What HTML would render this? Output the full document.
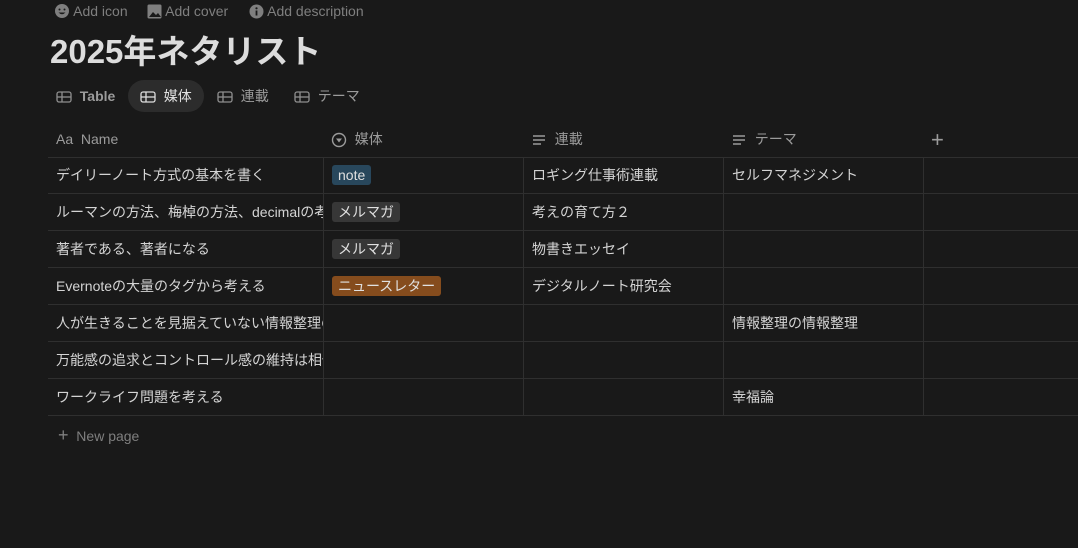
<!DOCTYPE html><html><head><meta charset="utf-8"><style>
body{margin:0;width:1078px;height:548px;background:#191919;font-family:"Liberation Sans","Noto Sans CJK JP",sans-serif;color:#d4d4d4;overflow:hidden;position:relative}
.a{position:absolute;white-space:nowrap}
.top{top:2px;font-size:14px;color:#7f7f7f;line-height:18px}
.tab{top:86px;font-size:14px;color:#9b9b9b;font-weight:bold;line-height:20px}
.row{position:absolute;left:48px;width:1030px;height:36px;border-bottom:1px solid #2f2f2f}
.c{position:absolute;top:0;height:37px;line-height:37px;font-size:14px;overflow:hidden;white-space:nowrap;padding-left:8px;box-sizing:border-box}
.v{position:absolute;top:0;width:1px;height:37px;background:#2f2f2f}
.tag{display:inline-block;line-height:20px;padding:0 6px;border-radius:3px;font-size:14px;color:#e0e0e0}
.h{color:#9b9b9b}
svg{vertical-align:middle}
</style></head><body>
<div class="a top" style="left:54px"><svg width="16" height="16" style="vertical-align:-3px"><circle cx="8" cy="8" r="7" fill="#7f7f7f"/><circle cx="5.5" cy="6.5" r="1" fill="#191919"/><circle cx="10.5" cy="6.5" r="1" fill="#191919"/><path d="M4.5 9.5q3.5 3.5 7 0" fill="#191919"/></svg> Add icon</div>
<div class="a top" style="left:147px"><svg width="15" height="15" style="vertical-align:-3px"><rect x="0.5" y="0.5" width="14" height="14" rx="1.5" fill="#7f7f7f"/><path d="M2 13l4-5 3 3 2-2 3 4z" fill="#191919"/></svg> Add cover</div>
<div class="a top" style="left:249px"><svg width="15" height="15" style="vertical-align:-3px"><circle cx="7.5" cy="7.5" r="7" fill="#7f7f7f"/><rect x="6.6" y="6.5" width="1.8" height="5" fill="#191919"/><circle cx="7.5" cy="4.3" r="1.1" fill="#191919"/></svg> Add description</div>
<div class="a" style="left:50px;top:25px;font-size:33px;font-weight:bold;color:#dcdcdc">2025年ネタリスト</div>
<div class="a" style="left:128px;top:80px;width:76px;height:32px;border-radius:16px;background:#2c2c2c"></div>
<div class="a tab" style="left:56px"><svg width="16" height="14"><rect x="1" y="2" width="14" height="10" rx="2" fill="none" stroke="#8f8f8f" stroke-width="1.3"/><line x1="1" y1="7" x2="15" y2="7" stroke="#8f8f8f" stroke-width="1.3"/><line x1="6" y1="2" x2="6" y2="12" stroke="#8f8f8f" stroke-width="1.3"/></svg>&nbsp; Table</div>
<div class="a tab" style="left:140px;color:#e0e0e0;font-weight:normal"><svg width="16" height="14"><rect x="1" y="2" width="14" height="10" rx="2" fill="none" stroke="#ddd" stroke-width="1.3"/><line x1="1" y1="7" x2="15" y2="7" stroke="#ddd" stroke-width="1.3"/><line x1="6" y1="2" x2="6" y2="12" stroke="#ddd" stroke-width="1.3"/></svg>&nbsp; 媒体</div>
<div class="a tab" style="left:217px;font-weight:normal"><svg width="16" height="14"><rect x="1" y="2" width="14" height="10" rx="2" fill="none" stroke="#8f8f8f" stroke-width="1.3"/><line x1="1" y1="7" x2="15" y2="7" stroke="#8f8f8f" stroke-width="1.3"/><line x1="6" y1="2" x2="6" y2="12" stroke="#8f8f8f" stroke-width="1.3"/></svg>&nbsp; 連載</div>
<div class="a tab" style="left:294px;font-weight:normal"><svg width="16" height="14"><rect x="1" y="2" width="14" height="10" rx="2" fill="none" stroke="#8f8f8f" stroke-width="1.3"/><line x1="1" y1="7" x2="15" y2="7" stroke="#8f8f8f" stroke-width="1.3"/><line x1="6" y1="2" x2="6" y2="12" stroke="#8f8f8f" stroke-width="1.3"/></svg>&nbsp; テーマ</div>

<div class="row" style="top:121px">
<div class="c h" style="left:0;width:275px">Aa&nbsp; Name</div>
<div class="c h" style="left:275px;width:200px"><svg width="16" height="16"><circle cx="8" cy="8" r="6.5" fill="none" stroke="#9b9b9b" stroke-width="1.4"/><path d="M5 6.5h6l-3 4z" fill="#9b9b9b"/></svg>&nbsp; 媒体</div>
<div class="c h" style="left:475px;width:200px"><svg width="16" height="14"><path d="M2 3h12M2 7h12M2 11h8" stroke="#9b9b9b" stroke-width="1.6"/></svg>&nbsp; 連載</div>
<div class="c h" style="left:675px;width:200px"><svg width="16" height="14"><path d="M2 3h12M2 7h12M2 11h8" stroke="#9b9b9b" stroke-width="1.6"/></svg>&nbsp; テーマ</div>
<div class="c h" style="left:875px;width:40px;font-size:22px">+</div>
</div>

<div class="row" style="top:157px"><div class="v" style="left:275px"></div><div class="v" style="left:475px"></div><div class="v" style="left:675px"></div><div class="v" style="left:875px"></div>
<div class="c" style="left:0;width:275px">デイリーノート方式の基本を書く</div><div class="c" style="left:276px;width:199px"><span class="tag" style="background:#28475c">note</span></div><div class="c" style="left:476px">ロギング仕事術連載</div><div class="c" style="left:676px">セルフマネジメント</div></div>
<div class="row" style="top:194px"><div class="v" style="left:275px"></div><div class="v" style="left:475px"></div><div class="v" style="left:675px"></div><div class="v" style="left:875px"></div>
<div class="c" style="left:0;width:275px">ルーマンの方法、梅棹の方法、decimalの考え方</div><div class="c" style="left:276px;width:199px"><span class="tag" style="background:#373737">メルマガ</span></div><div class="c" style="left:476px">考えの育て方２</div></div>
<div class="row" style="top:231px"><div class="v" style="left:275px"></div><div class="v" style="left:475px"></div><div class="v" style="left:675px"></div><div class="v" style="left:875px"></div>
<div class="c" style="left:0;width:275px">著者である、著者になる</div><div class="c" style="left:276px;width:199px"><span class="tag" style="background:#373737">メルマガ</span></div><div class="c" style="left:476px">物書きエッセイ</div></div>
<div class="row" style="top:268px"><div class="v" style="left:275px"></div><div class="v" style="left:475px"></div><div class="v" style="left:675px"></div><div class="v" style="left:875px"></div>
<div class="c" style="left:0;width:275px">Evernoteの大量のタグから考える</div><div class="c" style="left:276px;width:199px"><span class="tag" style="background:#854c1d">ニュースレター</span></div><div class="c" style="left:476px">デジタルノート研究会</div></div>
<div class="row" style="top:305px"><div class="v" style="left:275px"></div><div class="v" style="left:475px"></div><div class="v" style="left:675px"></div><div class="v" style="left:875px"></div>
<div class="c" style="left:0;width:275px">人が生きることを見据えていない情報整理の</div><div class="c" style="left:676px">情報整理の情報整理</div></div>
<div class="row" style="top:342px"><div class="v" style="left:275px"></div><div class="v" style="left:475px"></div><div class="v" style="left:675px"></div><div class="v" style="left:875px"></div>
<div class="c" style="left:0;width:275px">万能感の追求とコントロール感の維持は相似</div></div>
<div class="row" style="top:379px"><div class="v" style="left:275px"></div><div class="v" style="left:475px"></div><div class="v" style="left:675px"></div><div class="v" style="left:875px"></div>
<div class="c" style="left:0;width:275px">ワークライフ問題を考える</div><div class="c" style="left:676px">幸福論</div></div>
<div class="a" style="left:58px;top:425px;font-size:14px;color:#7f7f7f"><span style="font-size:18px">+</span>&nbsp; New page</div>
</body></html>
